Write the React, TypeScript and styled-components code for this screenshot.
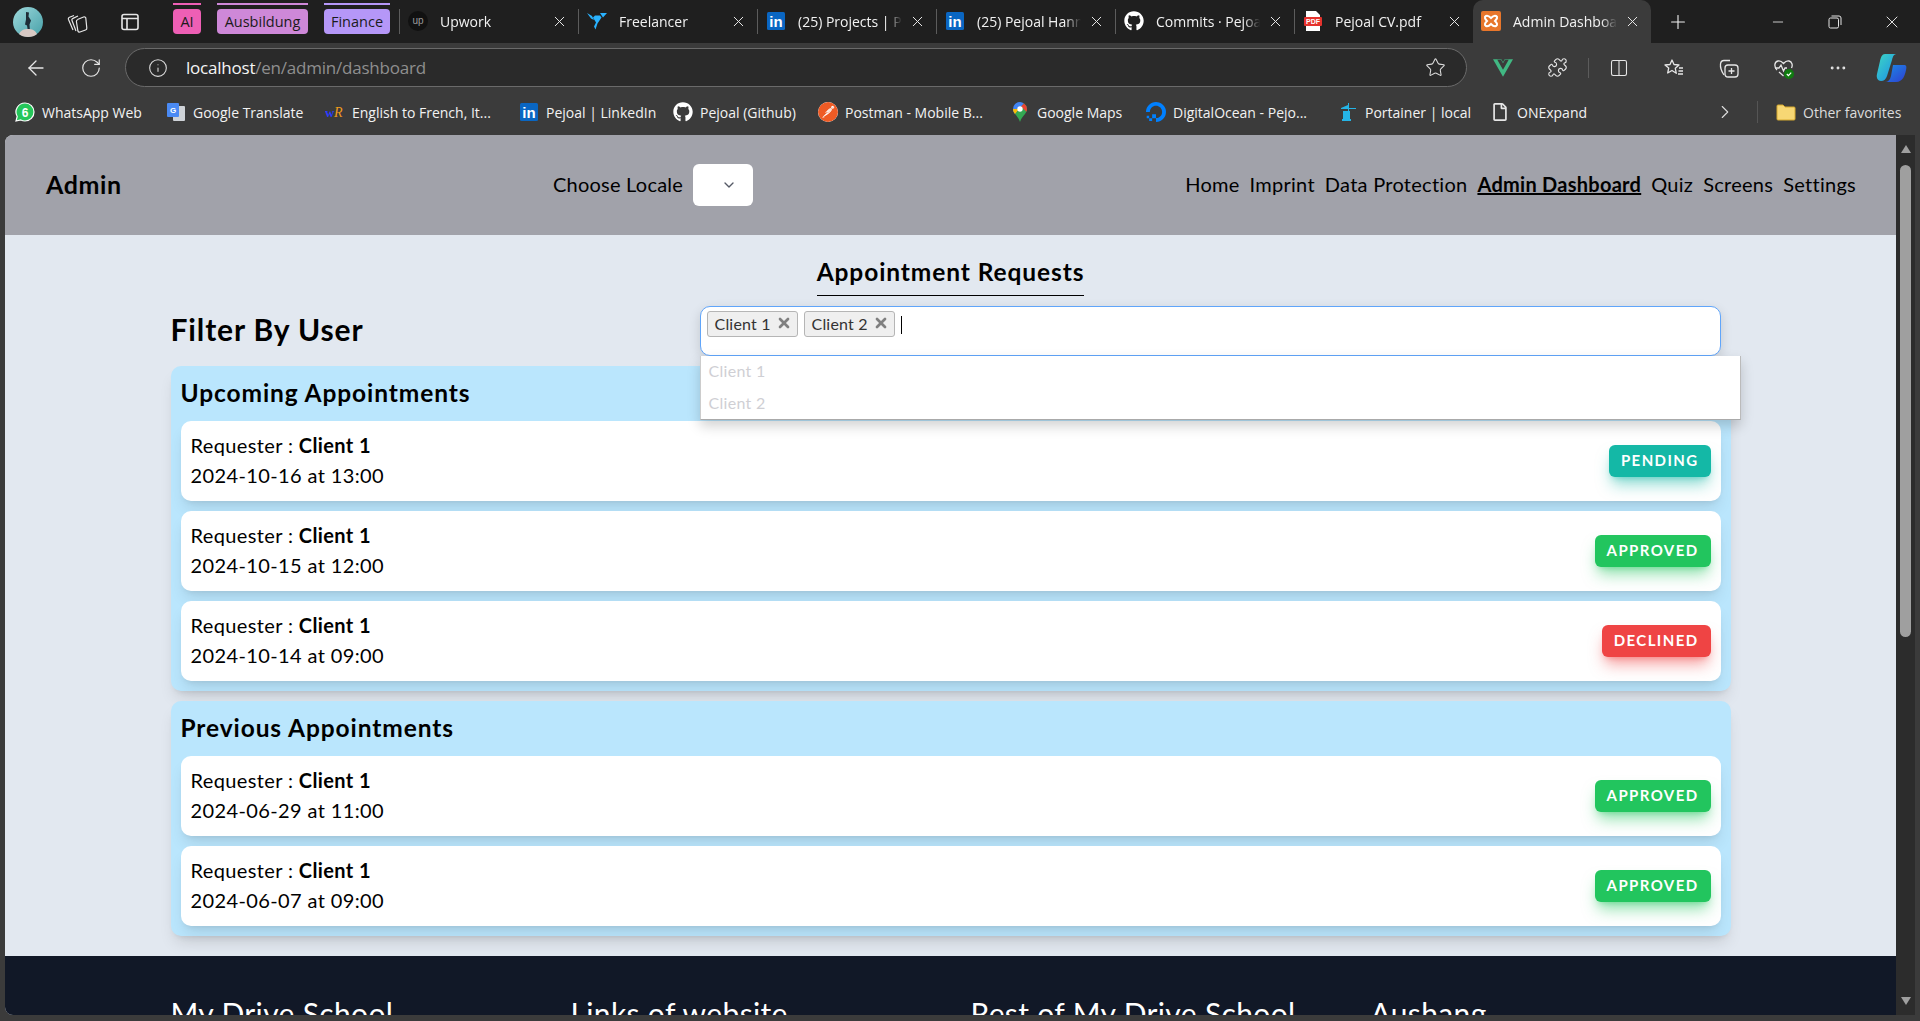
import React from 'react';
import styled, { createGlobalStyle } from 'styled-components';
import { FaGithub, FaRegFile } from 'react-icons/fa';
import { SiDigitalocean, SiPostman, SiVuedotjs } from 'react-icons/si';
import {
  ArrowLeft,
  ChevronDown,
  ChevronRight,
  Columns2,
  Info,
  Minus,
  MoreHorizontal,
  Plus,
  Puzzle,
  RotateCw,
  Star,
  X
} from 'lucide-react';

const GlobalStyle = createGlobalStyle`
  html, body {
    margin: 0;
    height: 100%;
    overflow: hidden;
    background: #3b3b3b;
  }
  * {
    box-sizing: border-box;
  }
`;

const uiFont = `"Open Sans", "Noto Sans", sans-serif`;
const pageFont = `"Lato", "Noto Sans", sans-serif`;

const Window = styled.div`
  width: 1920px;
  height: 1021px;
  display: flex;
  flex-direction: column;
  overflow: hidden;
  background: #3b3b3b;
  font-family: ${uiFont};
  color: #f2f2f2;
`;

const TabStrip = styled.div`
  height: 43px;
  flex: none;
  display: flex;
  align-items: stretch;
  padding-left: 3px;
  background: #1f1f1f;
`;

const StripSlot = styled.div<{ $w: number }>`
  width: ${p => p.$w}px;
  flex: none;
  display: flex;
  align-items: center;
  justify-content: center;
`;

const Groups = styled.div`
  display: flex;
  align-items: center;
  gap: 16px;
  padding: 0 9px 0 14px;
`;

const GroupChip = styled.div<{ $bg: string; $w: number }>`
  position: relative;
  width: ${p => p.$w}px;
  height: 25px;
  display: flex;
  align-items: center;
  justify-content: center;
  border-radius: 4px;
  background: ${p => p.$bg};
  color: #1b1b1b;
  font-size: 14.5px;
  &::before {
    content: '';
    position: absolute;
    left: 0;
    right: 0;
    top: -6px;
    height: 2px;
    background: ${p => p.$bg};
  }
`;

const Tab = styled.div<{ $active?: boolean; $sep?: boolean }>`
  position: relative;
  width: ${p => (p.$active ? 178 : 179)}px;
  flex: none;
  display: flex;
  align-items: center;
  padding: 0 0 1px ${p => (p.$active ? 8 : 9)}px;
  font-size: 14px;
  border-radius: ${p => (p.$active ? '10px 10px 0 0' : '0')};
  background: ${p => (p.$active ? '#3b3b3b' : 'transparent')};
  &::before {
    content: '';
    display: ${p => (p.$sep ? 'block' : 'none')};
    position: absolute;
    left: 0;
    top: 9px;
    bottom: 9px;
    width: 1px;
    background: #5c5c5c;
  }
`;

const TabIcon = styled.span`
  width: 20px;
  height: 20px;
  flex: none;
  display: flex;
  align-items: center;
  justify-content: center;
`;

const TabTitle = styled.span<{ $w: number }>`
  width: ${p => p.$w}px;
  margin-left: 12px;
  flex: none;
  overflow: hidden;
  white-space: nowrap;
  -webkit-mask-image: linear-gradient(90deg, #000 85%, transparent);
  mask-image: linear-gradient(90deg, #000 85%, transparent);
`;

const TabClose = styled.span`
  position: absolute;
  right: 10px;
  display: flex;
  color: #e8e8e8;
`;

const StripSpacer = styled.div`
  flex: 1;
`;

const Toolbar = styled.div`
  height: 45px;
  flex: none;
  display: flex;
  align-items: flex-start;
  padding: 5px 0 0 8px;
`;

const ToolSlot = styled.div<{ $w?: number }>`
  width: ${p => p.$w ?? 55}px;
  height: 39px;
  flex: none;
  display: flex;
  align-items: center;
  justify-content: center;
  color: #e6e6e6;
`;

const AddressBar = styled.div`
  width: 1342px;
  height: 39px;
  margin: 0 8px 0 7px;
  flex: none;
  display: flex;
  align-items: center;
  padding: 0 20px 0 22px;
  border: 1px solid #6a6a6a;
  border-radius: 20px;
  background: #2a2a2a;
  color: #dcdcdc;
`;

const Url = styled.div`
  flex: 1;
  margin-left: 18px;
  font-size: 17px;
  letter-spacing: -0.22px;
  color: #8f8f8f;
  span {
    color: #f5f5f5;
  }
`;

const ToolDivider = styled.div`
  width: 6px;
  height: 39px;
  flex: none;
  display: flex;
  align-items: center;
  justify-content: center;
  &::after {
    content: '';
    width: 1px;
    height: 20px;
    background: #5c5c5c;
  }
`;

const BookmarkBar = styled.div`
  height: 47px;
  flex: none;
  display: flex;
  align-items: center;
  padding: 1px 0 0 15px;
  font-size: 14px;
`;

const Bookmark = styled.div<{ $w: number }>`
  width: ${p => p.$w}px;
  flex: none;
  display: flex;
  align-items: center;
  gap: 7px;
  white-space: nowrap;
`;

const BookmarkIcon = styled.span`
  width: 20px;
  height: 20px;
  flex: none;
  display: flex;
  align-items: center;
  justify-content: center;
`;

const BookmarkEnd = styled.div`
  margin-left: auto;
  display: flex;
  align-items: center;
  color: #dcdcdc;
`;

const Divider = styled.div`
  width: 1px;
  height: 22px;
  margin: 0 18px 0 21px;
  background: #555;
`;

const Viewport = styled.div`
  flex: 1;
  min-height: 0;
  display: flex;
  padding: 0 5px 6px 5px;
`;

const Page = styled.main`
  flex: 1;
  min-width: 0;
  overflow: hidden;
  display: flex;
  flex-direction: column;
  border-radius: 8px 0 0 8px;
  background: #e2e8f0;
  font-family: ${pageFont};
  color: #000;
`;

const Scrollbar = styled.div`
  width: 19px;
  flex: none;
  display: flex;
  flex-direction: column;
  align-items: center;
  padding: 10px 0;
  background: #2c2c2c;
`;

const ScrollThumb = styled.div`
  width: 11px;
  height: 472px;
  margin-top: 12px;
  border-radius: 6px;
  background: #9f9f9f;
`;

const ScrollArrow = styled.div<{ $down?: boolean }>`
  width: 0;
  height: 0;
  border-left: 5px solid transparent;
  border-right: 5px solid transparent;
  ${p => (p.$down ? 'border-top: 8px solid #9f9f9f; margin-top: auto;' : 'border-bottom: 8px solid #9f9f9f;')}
`;

const Header = styled.header`
  height: 100px;
  flex: none;
  display: flex;
  align-items: center;
  padding: 0 40px 0 41px;
  background: #a1a2aa;
`;

const Brand = styled.div`
  width: 507px;
  flex: none;
  padding-bottom: 3px;
  font-size: 25px;
  font-weight: 700;
  letter-spacing: 0.6px;
`;

const LocalePicker = styled.div`
  display: flex;
  align-items: center;
  gap: 10px;
  font-size: 20px;
  letter-spacing: 0.22px;
`;

const LocaleText = styled.span`
  padding-bottom: 2px;
`;

const LocaleSelect = styled.div`
  width: 60px;
  height: 42px;
  display: flex;
  align-items: center;
  justify-content: flex-end;
  padding-right: 16px;
  border-radius: 6px;
  background: #fff;
  color: #555a66;
`;

const Nav = styled.nav`
  margin-left: auto;
  padding-bottom: 2px;
  display: flex;
  gap: 10px;
  font-size: 20px;
  letter-spacing: 0.27px;
`;

const NavLink = styled.a<{ $active?: boolean }>`
  font-weight: ${p => (p.$active ? 700 : 400)};
  text-decoration: ${p => (p.$active ? 'underline' : 'none')};
  color: #000;
`;

const Content = styled.div`
  width: 1560px;
  margin: 0 auto;
  flex: none;
  display: flex;
  flex-direction: column;
`;

const PageTitle = styled.h1`
  align-self: center;
  margin: 20px 0 10px;
  padding-bottom: 7px;
  border-bottom: 1px solid #000;
  font-size: 24.5px;
  line-height: 33px;
  font-weight: 700;
  letter-spacing: 0.9px;
`;

const FilterRow = styled.div`
  height: 50px;
  margin-bottom: 10px;
  display: flex;
  align-items: center;
`;

const FilterTitle = styled.h2`
  width: 530px;
  flex: none;
  margin: 0;
  padding-bottom: 4px;
  font-size: 30px;
  font-weight: 700;
  letter-spacing: 0.87px;
`;

const SelectWrap = styled.div`
  position: relative;
  width: 1021px;
  height: 50px;
  margin-left: -1px;
`;

const SelectBox = styled.div`
  height: 50px;
  display: flex;
  align-items: flex-start;
  gap: 6px;
  padding: 4px 6px;
  border: 1px solid #60a5fa;
  border-radius: 10px;
  background: #fff;
  box-shadow: 0 4px 12px rgba(0, 0, 0, 0.14);
`;

const Tag = styled.div`
  width: 91px;
  height: 26px;
  display: flex;
  align-items: center;
  justify-content: space-between;
  padding: 0 5px 2px 7px;
  border: 1px solid #b5b5b5;
  border-radius: 3px;
  background: #efefef;
  color: #333;
  font-size: 16px;
  letter-spacing: 0.2px;
`;

const TagX = styled.span`
  display: flex;
  color: #808080;
`;

const Caret = styled.div`
  width: 1px;
  height: 18px;
  margin: 5px 0 0 0;
  background: #000;
`;

const OptionList = styled.div`
  position: absolute;
  z-index: 2;
  top: 50px;
  left: 0;
  width: 1041px;
  height: 64px;
  background: #fff;
  border-bottom: 1px solid #aaa;
  border-right: 1px solid #bbb;
  border-left: 1px solid #ccc;
  box-shadow: 0 6px 12px rgba(0, 0, 0, 0.18);
`;

const Option = styled.div`
  height: 32px;
  padding: 0 8px 4px;
  display: flex;
  align-items: center;
  color: #cfcfd4;
  font-size: 16px;
  letter-spacing: 0.3px;
`;

const Section = styled.section`
  margin-bottom: 10px;
  padding: 0 10px 10px;
  border-radius: 10px;
  background: #bae6fd;
  box-shadow: 0 10px 15px -3px rgba(0, 0, 0, 0.1), 0 4px 6px -4px rgba(0, 0, 0, 0.1);
  &:last-child {
    margin-bottom: 0;
  }
`;

const SectionTitle = styled.h3`
  height: 55px;
  margin: 0;
  padding-bottom: 3px;
  display: flex;
  align-items: center;
  font-size: 24.5px;
  font-weight: 700;
  letter-spacing: 0.9px;
`;

const Cards = styled.div`
  display: flex;
  flex-direction: column;
  gap: 10px;
`;

const Card = styled.article`
  height: 80px;
  display: flex;
  align-items: center;
  justify-content: space-between;
  padding: 0 10px;
  border-radius: 10px;
  background: #fff;
  box-shadow: 0 10px 15px -3px rgba(0, 0, 0, 0.1), 0 4px 6px -4px rgba(0, 0, 0, 0.1);
`;

const CardText = styled.div`
  padding-bottom: 3px;
  font-size: 20px;
  line-height: 30px;
  letter-spacing: 0.38px;
`;

const statusColors = {
  PENDING: { bg: '#14b8a6', glow: 'rgba(20, 184, 166, 0.5)' },
  APPROVED: { bg: '#22c55e', glow: 'rgba(34, 197, 94, 0.5)' },
  DECLINED: { bg: '#ef4444', glow: 'rgba(239, 68, 68, 0.5)' }
};

type Status = keyof typeof statusColors;

const Badge = styled.span<{ $status: Status }>`
  height: 32px;
  display: flex;
  align-items: center;
  padding: 0 12px 2px;
  border-radius: 6px;
  background: ${p => statusColors[p.$status].bg};
  box-shadow: 0 10px 15px -3px ${p => statusColors[p.$status].glow}, 0 4px 6px -4px ${p => statusColors[p.$status].glow};
  color: #fff;
  font-size: 15px;
  font-weight: 700;
  letter-spacing: 1.4px;
`;

const Footer = styled.footer`
  flex: 1;
  margin-top: 20px;
  background: #111827;
  color: #fff;
`;

const FooterGrid = styled.div`
  width: 1560px;
  margin: 0 auto;
  padding-top: 37px;
  display: grid;
  grid-template-columns: repeat(4, 400px);
`;

const FooterHeading = styled.h4`
  margin: 0;
  font-size: 30px;
  font-weight: 400;
  line-height: 40px;
  letter-spacing: 0.35px;
  white-space: nowrap;
`;

const Avatar = () => (
  <svg width="30" height="30" viewBox="0 0 30 30">
    <defs>
      <linearGradient id="av" x1="0" y1="0" x2="1" y2="1">
        <stop offset="0" stopColor="#9ed9dc" />
        <stop offset="1" stopColor="#46a0a8" />
      </linearGradient>
    </defs>
    <circle cx="15" cy="15" r="15" fill="url(#av)" />
    <path d="M13 5l3 .5-.5 4 2.500 4-1.500 4 .5 7h-2l-1-6-2-1 1-5z" fill="#1e2c36" />
    <path d="M6 27c2-4 5-5 9-5s7 1 9 5c-2 2-5 3-9 3s-7-1-9-3z" fill="#d9c9c4" />
  </svg>
);

const WorkspacesIcon = () => (
  <svg width="22" height="24" viewBox="0 0 22 24" fill="none" stroke="#e6e6e6" strokeWidth="1.2">
    <path d="M7 20L2.500 9.500c-.4-1 0-1.800 1-2.200L8 5.500" />
    <path d="M10 21L6 10.500c-.4-1 .1-1.800 1-2.100L12 6" />
    <path d="M11.500 9.500l6-2.500c1-.4 2 0 2.300 1l1 10c.1 1-.4 1.800-1.300 2l-5.500 2c-1 .3-1.800-.1-2.100-1l-1.500-9.500c-.1-1 .5-1.700 1.600-2z" />
  </svg>
);

const VerticalTabsIcon = () => (
  <svg width="18" height="18" viewBox="0 0 18 18" fill="none" stroke="#e6e6e6" strokeWidth="1.6">
    <rect x="1" y="1.500" width="16" height="15" rx="2" />
    <path d="M1 5.500h16M6 5.500v11" />
  </svg>
);

const RestoreIcon = () => (
  <svg width="14" height="14" viewBox="0 0 14 14" fill="none" stroke="#e6e6e6" strokeWidth="1">
    <rect x="1" y="3" width="9.500" height="10" rx="1.500" />
    <path d="M3.500 1h7.500a2 2 0 0 1 2 2v7" />
  </svg>
);

const UpworkIcon = () => (
  <svg width="20" height="20" viewBox="0 0 20 20">
    <circle cx="10" cy="10" r="10" fill="#111" />
    <text x="10" y="13" textAnchor="middle" fontSize="10" fill="#9a9a9a" fontFamily="Liberation Sans">up</text>
  </svg>
);

const FreelancerIcon = () => (
  <svg width="20" height="18" viewBox="0 0 20 18" fill="#29b2fe">
    <path d="M13 1h7l-4 4.500zM0 1l5 3 2 4-3-1.500zM8 3.500h5l1.500 2-4 6-2 6-1.500-3 2-4-3-5z" />
  </svg>
);

const LinkedInBox = () => (
  <svg width="18" height="18" viewBox="0 0 18 18">
    <rect width="18" height="18" rx="1.500" fill="#0a66c2" />
    <text x="9" y="15" textAnchor="middle" fontSize="15" fontWeight="700" fill="#fff" fontFamily="Liberation Sans">in</text>
  </svg>
);

const PdfIcon = () => (
  <svg width="20" height="22" viewBox="0 0 20 22">
    <path d="M3 1h10l4 4v16H3z" fill="#fff" />
    <rect x="1" y="7" width="18" height="9" rx="1" fill="#e5322d" />
    <text x="10" y="14" textAnchor="middle" fontSize="7" fontWeight="700" fill="#fff" fontFamily="Liberation Sans">PDF</text>
  </svg>
);

const XamppIcon = () => (
  <svg width="20" height="20" viewBox="0 0 20 20">
    <rect width="20" height="20" rx="2" fill="#e8762b" />
    <path d="M5 5c2-1 3 0 5 2 2-2 3-3 5-2s1 3-1 5c2 2 3 4 1 5s-3 0-5-2c-2 2-3 3-5 2s-1-3 1-5c-2-2-3-4-1-5z" fill="none" stroke="#fff" strokeWidth="2" />
  </svg>
);

const WhatsAppIcon = () => (
  <svg width="20" height="20" viewBox="0 0 20 20">
    <path d="M10 1a9 9 0 0 1 0 18c-1.500 0-3-.4-4.200-1L1 19l1.200-4.500A9 9 0 0 1 10 1z" fill="#25c65a" stroke="#fff" strokeWidth="1.200" />
    <text x="10" y="14.500" textAnchor="middle" fontSize="12" fontWeight="700" fill="#fff" fontFamily="Liberation Sans">6</text>
  </svg>
);

const TranslateIcon = () => (
  <svg width="20" height="20" viewBox="0 0 20 20">
    <rect x="7" y="4" width="12" height="15" rx="1" fill="#cfd3d8" />
    <rect x="1" y="1" width="12" height="14" rx="1" fill="#4a8af4" />
    <text x="4" y="11" fontSize="8" fontWeight="700" fill="#fff" fontFamily="Liberation Sans">G</text>
  </svg>
);

const WrIcon = () => (
  <svg width="20" height="16" viewBox="0 0 20 16">
    <text x="0" y="13" fontSize="13" fontWeight="700" fill="#2a3bff" fontFamily="Liberation Serif">w</text>
    <text x="9" y="13" fontSize="14" fontStyle="italic" fill="#ef9a1c" fontFamily="Liberation Serif">R</text>
  </svg>
);

const MapsIcon = () => (
  <svg width="16" height="22" viewBox="0 0 16 22">
    <path d="M8 1a7 7 0 0 0-7 7c0 2 .8 3.500 2 5l9-10.500A7 7 0 0 0 8 1z" fill="#4285f4" />
    <path d="M12 2.500L3 13c1.800 2.200 4 4.500 5 8 1-3.500 3.200-5.800 5-8 1.200-1.500 2-3 2-5a7 7 0 0 0-3-5.500z" fill="#34a853" />
    <path d="M12 2.500a7 7 0 0 1 3 5.500c0 1-.2 1.900-.6 2.700L9 5.500z" fill="#ea4335" />
    <path d="M1 8c0 2 .8 3.500 2 5l4-5z" fill="#fbbc04" />
    <circle cx="8" cy="8" r="2.700" fill="#fff" />
  </svg>
);

const PortainerIcon = () => (
  <svg width="18" height="20" viewBox="0 0 18 20" fill="#25b4e6">
    <path d="M9 1h1v5h7v1H10v2H9V7H2V6l7-3z" />
    <rect x="4" y="9" width="7" height="8" />
    <rect x="3" y="17" width="9" height="2" />
  </svg>
);

const FolderIcon = () => (
  <svg width="20" height="20" viewBox="0 0 20 20">
    <path d="M1 4a1 1 0 0 1 1-1h5l2 2h9a1 1 0 0 1 1 1v11a1 1 0 0 1-1 1H2a1 1 0 0 1-1-1z" fill="#f7d774" stroke="#d6a92f" />
  </svg>
);

const FavoritesIcon = () => (
  <svg width="22" height="22" viewBox="0 0 22 22" fill="none" stroke="#e6e6e6" strokeWidth="1.3" strokeLinejoin="round">
    <path d="M9 3l2 4.500 5 .5-3.700 3.300 1 5L9 13.500 4.700 16l1-5L2 8l5-.5z" />
    <path d="M16 11h4M15.500 14h4.500M15 17h5" />
  </svg>
);

const CollectionsIcon = () => (
  <svg width="22" height="22" viewBox="0 0 22 22" fill="none" stroke="#e6e6e6" strokeWidth="1.3">
    <path d="M6 18C4 15 2 11 2.500 7c.2-2 1.500-3.500 3.500-3.500h6" />
    <rect x="7" y="8" width="13" height="12" rx="3" />
    <path d="M13.500 11v6M10.500 14h6" />
  </svg>
);

const HealthIcon = () => (
  <svg width="24" height="24" viewBox="0 0 24 24" fill="none">
    <path d="M5 14C2 11 2 6 6 5c2.500-.6 4 .8 5.500 2.500C13 5.800 14.500 4.400 17 5c3 .8 4 4 2.500 7M11.500 20L7 16" stroke="#e6e6e6" strokeWidth="1.300" />
    <path d="M3 12h4l2-3 2.500 6 1.500-3h2" stroke="#e6e6e6" strokeWidth="1.300" />
    <circle cx="17" cy="18" r="5" fill="#107c10" />
    <path d="M14.800 18l1.600 1.600 2.800-3" stroke="#fff" strokeWidth="1.200" />
  </svg>
);

const CopilotIcon = () => (
  <svg width="32" height="32" viewBox="0 0 32 32">
    <defs>
      <linearGradient id="cpA" x1="0" y1="0" x2="1" y2="1">
        <stop offset="0" stopColor="#3dd6c4" />
        <stop offset="1" stopColor="#1b8ce8" />
      </linearGradient>
      <linearGradient id="cpB" x1="0" y1="0" x2="1" y2="1">
        <stop offset="0" stopColor="#1b8ce8" />
        <stop offset="1" stopColor="#2f3fd0" />
      </linearGradient>
    </defs>
    <path d="M10 2h12c-3 0-4 2-5 6l-5 16c-1 3-3 5-6 5-3 0-5-3-4-7l3-13c1-4 2-7 5-7z" fill="url(#cpA)" />
    <path d="M18 13h11c2 0 3 1 2 5-1 5-3 12-10 12H10c3 0 5-2 6-6z" fill="url(#cpB)" />
  </svg>
);

const tabs = [
  { icon: <UpworkIcon />, title: 'Upwork', w: 100 },
  { icon: <FreelancerIcon />, title: 'Freelancer', w: 100 },
  { icon: <LinkedInBox />, title: '(25) Projects | Pejoal', w: 104 },
  { icon: <LinkedInBox />, title: '(25) Pejoal Hanna', w: 104 },
  { icon: <FaGithub size={20} color="#fff" />, title: 'Commits · Pejoal', w: 104 },
  { icon: <PdfIcon />, title: 'Pejoal CV.pdf', w: 104 }
];

const bookmarks = [
  { icon: <WhatsAppIcon />, label: 'WhatsApp Web', w: 151 },
  { icon: <TranslateIcon />, label: 'Google Translate', w: 159 },
  { icon: <WrIcon />, label: 'English to French, It...', w: 194 },
  { icon: <LinkedInBox />, label: 'Pejoal | LinkedIn', w: 154 },
  { icon: <FaGithub size={20} color="#fff" />, label: 'Pejoal (Github)', w: 145 },
  { icon: <SiPostman size={20} color="#ef5b25" style={{ background: '#fff', borderRadius: 10 }} />, label: 'Postman - Mobile B...', w: 192 },
  { icon: <MapsIcon />, label: 'Google Maps', w: 136 },
  { icon: <SiDigitalocean size={20} color="#0080ff" />, label: 'DigitalOcean - Pejo...', w: 192 },
  { icon: <PortainerIcon />, label: 'Portainer | local', w: 152 },
  { icon: <FaRegFile size={18} color="#e6e6e6" />, label: 'ONExpand', w: 120 }
];

const upcoming: { date: string; status: Status }[] = [
  { date: '2024-10-16 at 13:00', status: 'PENDING' },
  { date: '2024-10-15 at 12:00', status: 'APPROVED' },
  { date: '2024-10-14 at 09:00', status: 'DECLINED' }
];

const previous: { date: string; status: Status }[] = [
  { date: '2024-06-29 at 11:00', status: 'APPROVED' },
  { date: '2024-06-07 at 09:00', status: 'APPROVED' }
];

const AppointmentCard = ({ date, status }: { date: string; status: Status }) => (
  <Card>
    <CardText>
      <div>
        Requester : <b>Client 1</b>
      </div>
      <div>{date}</div>
    </CardText>
    <Badge $status={status}>{status}</Badge>
  </Card>
);

export default function App() {
  return (
    <Window>
      <GlobalStyle />
      <TabStrip>
        <StripSlot $w={50}>
          <Avatar />
        </StripSlot>
        <StripSlot $w={48}>
          <WorkspacesIcon />
        </StripSlot>
        <StripSlot $w={58}>
          <VerticalTabsIcon />
        </StripSlot>
        <Groups>
          <GroupChip $bg="#ee5fb5" $w={28}>AI</GroupChip>
          <GroupChip $bg="#ce88d8" $w={91}>Ausbildung</GroupChip>
          <GroupChip $bg="#b597f8" $w={66}>Finance</GroupChip>
        </Groups>
        {tabs.map(tab => (
          <Tab key={tab.title} $sep>
            <TabIcon>{tab.icon}</TabIcon>
            <TabTitle $w={tab.w}>{tab.title}</TabTitle>
            <TabClose>
              <X size={17} strokeWidth={1.4} />
            </TabClose>
          </Tab>
        ))}
        <Tab $active>
          <TabIcon>
            <XamppIcon />
          </TabIcon>
          <TabTitle $w={104}>Admin Dashboard</TabTitle>
          <TabClose>
            <X size={17} strokeWidth={1.4} />
          </TabClose>
        </Tab>
        <StripSlot $w={53}>
          <Plus size={22} strokeWidth={1.2} />
        </StripSlot>
        <StripSpacer />
        <StripSlot $w={57}>
          <Minus size={16} strokeWidth={1.2} />
        </StripSlot>
        <StripSlot $w={57}>
          <RestoreIcon />
        </StripSlot>
        <StripSlot $w={57}>
          <X size={20} strokeWidth={1.1} />
        </StripSlot>
      </TabStrip>

      <Toolbar>
        <ToolSlot>
          <ArrowLeft size={24} strokeWidth={1.3} />
        </ToolSlot>
        <ToolSlot>
          <RotateCw size={22} strokeWidth={1.3} />
        </ToolSlot>
        <AddressBar>
          <Info size={20} strokeWidth={1.3} />
          <Url>
            <span>localhost</span>/en/admin/dashboard
          </Url>
          <Star size={21} strokeWidth={1.2} />
        </AddressBar>
        <ToolSlot>
          <SiVuedotjs size={20} color="#41b883" />
        </ToolSlot>
        <ToolSlot>
          <Puzzle size={21} strokeWidth={1.3} />
        </ToolSlot>
        <ToolDivider />
        <ToolSlot>
          <Columns2 size={20} strokeWidth={1.3} />
        </ToolSlot>
        <ToolSlot>
          <FavoritesIcon />
        </ToolSlot>
        <ToolSlot>
          <CollectionsIcon />
        </ToolSlot>
        <ToolSlot>
          <HealthIcon />
        </ToolSlot>
        <ToolSlot $w={53}>
          <MoreHorizontal size={20} strokeWidth={1.5} />
        </ToolSlot>
        <ToolSlot $w={53}>
          <CopilotIcon />
        </ToolSlot>
      </Toolbar>

      <BookmarkBar>
        {bookmarks.map(item => (
          <Bookmark key={item.label} $w={item.w}>
            <BookmarkIcon>{item.icon}</BookmarkIcon>
            {item.label}
          </Bookmark>
        ))}
        <BookmarkEnd>
          <ChevronRight size={22} strokeWidth={1.2} />
          <Divider />
          <Bookmark $w={144}>
            <BookmarkIcon>
              <FolderIcon />
            </BookmarkIcon>
            Other favorites
          </Bookmark>
        </BookmarkEnd>
      </BookmarkBar>

      <Viewport>
        <Page>
          <Header>
            <Brand>Admin</Brand>
            <LocalePicker>
              <LocaleText>Choose Locale</LocaleText>
              <LocaleSelect>
                <ChevronDown size={16} strokeWidth={2} />
              </LocaleSelect>
            </LocalePicker>
            <Nav>
              <NavLink>Home</NavLink>
              <NavLink>Imprint</NavLink>
              <NavLink>Data Protection</NavLink>
              <NavLink $active>Admin Dashboard</NavLink>
              <NavLink>Quiz</NavLink>
              <NavLink>Screens</NavLink>
              <NavLink>Settings</NavLink>
            </Nav>
          </Header>
          <Content>
            <PageTitle>Appointment Requests</PageTitle>
            <FilterRow>
              <FilterTitle>Filter By User</FilterTitle>
              <SelectWrap>
                <SelectBox>
                  <Tag>
                    Client 1
                    <TagX>
                      <X size={16} strokeWidth={4} />
                    </TagX>
                  </Tag>
                  <Tag>
                    Client 2
                    <TagX>
                      <X size={16} strokeWidth={4} />
                    </TagX>
                  </Tag>
                  <Caret />
                </SelectBox>
                <OptionList>
                  <Option>Client 1</Option>
                  <Option>Client 2</Option>
                </OptionList>
              </SelectWrap>
            </FilterRow>
            <Section>
              <SectionTitle>Upcoming Appointments</SectionTitle>
              <Cards>
                {upcoming.map(item => (
                  <AppointmentCard key={item.date} {...item} />
                ))}
              </Cards>
            </Section>
            <Section>
              <SectionTitle>Previous Appointments</SectionTitle>
              <Cards>
                {previous.map(item => (
                  <AppointmentCard key={item.date} {...item} />
                ))}
              </Cards>
            </Section>
          </Content>
          <Footer>
            <FooterGrid>
              <FooterHeading>My Drive School</FooterHeading>
              <FooterHeading>Links of website</FooterHeading>
              <FooterHeading>Rest of My Drive School</FooterHeading>
              <FooterHeading>Aushang</FooterHeading>
            </FooterGrid>
          </Footer>
        </Page>
        <Scrollbar>
          <ScrollArrow />
          <ScrollThumb />
          <ScrollArrow $down />
        </Scrollbar>
      </Viewport>
    </Window>
  );
}
